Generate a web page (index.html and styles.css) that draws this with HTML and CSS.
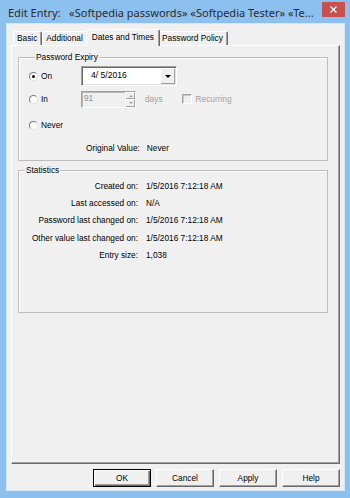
FILE: index.html
```html
<!DOCTYPE html>
<html lang="en">
<head>
  <meta charset="UTF-8" />
  <title>Edit Entry</title>
  <link rel="stylesheet" href="styles.css">
</head>
<body>
  <div class="window">
    <!-- Title bar -->
    <div class="titlebar">
      <span class="title">Edit Entry:   «Softpedia passwords» «Softpedia Tester» «Te...</span>
      <span class="close">
        <svg width="7" height="7" viewBox="0 0 7 7"><path d="M0.5 0.5L6.5 6.5M6.5 0.5L0.5 6.5" stroke="#fff" stroke-width="1.3"/></svg>
      </span>
    </div>

    <div class="client">
      <!-- Tabs -->
      <div class="tabs">
        <div class="tab">Basic</div>
        <div class="tab">Additional</div>
        <div class="tab active">Dates and Times</div>
        <div class="tab">Password Policy</div>
      </div>

      <div class="panel">
        <!-- Password Expiry -->
        <fieldset class="group expiry">
          <legend>Password Expiry</legend>
          <div class="row row-on">
            <label class="opt"><span class="radio checked"></span>On</label>
            <div class="combo">
              <span class="combo-text">4/ 5/2016</span>
              <span class="combo-btn"><i class="arrow"></i></span>
            </div>
          </div>
          <div class="row row-in">
            <label class="opt"><span class="radio"></span>In</label>
            <div class="spin">
              <span class="spin-text">91</span>
              <span class="spin-btns">
                <span class="spin-up"><i class="tri up"></i></span>
                <span class="spin-down"><i class="tri down"></i></span>
              </span>
            </div>
            <span class="muted days">days</span>
            <span class="check"></span>
            <span class="muted">Recurring</span>
          </div>
          <div class="row row-never">
            <label class="opt"><span class="radio"></span>Never</label>
          </div>
          <div class="row row-orig">
            <span class="key">Original Value:</span>
            <span>Never</span>
          </div>
        </fieldset>

        <!-- Statistics -->
        <fieldset class="group stats">
          <legend>Statistics</legend>
          <div class="stat-grid">
            <span class="key">Created on:</span><span>1/5/2016 7:12:18 AM</span>
            <span class="key">Last accessed on:</span><span>N/A</span>
            <span class="key">Password last changed on:</span><span>1/5/2016 7:12:18 AM</span>
            <span class="key">Other value last changed on:</span><span>1/5/2016 7:12:18 AM</span>
            <span class="key">Entry size:</span><span>1,038</span>
          </div>
        </fieldset>
      </div>

      <!-- Dialog buttons -->
      <div class="buttons">
        <button class="btn default">OK</button>
        <button class="btn">Cancel</button>
        <button class="btn">Apply</button>
        <button class="btn">Help</button>
      </div>
    </div>
  </div>
</body>
</html>
```

FILE: styles.css
```css
/* Global */
body {
  margin: 0;
  font-family: 'Liberation Sans', Arial, sans-serif;
  font-size: 8.3px;
  color: #000;
}

/* Window frame */
.window {
  width: 350px;
  height: 498px;
  box-sizing: border-box;
  background: #8cc0ef;
  padding: 0 5px 7px 6px;
  display: flex;
  flex-direction: column;
  overflow: hidden;
}

.titlebar {
  height: 23px;
  display: flex;
  align-items: flex-start;
}

.title {
  margin: 5px 0 0 2px;
  font-family: 'Noto Sans', 'Open Sans', sans-serif;
  font-size: 11px;
  line-height: 16px;
  color: #2b2b2b;
  white-space: pre;
}

.close {
  margin: 2px 0 0 auto;
  width: 23px;
  height: 15px;
  background: #c75050;
  display: flex;
  align-items: center;
  justify-content: center;
}

.client {
  flex: 1;
  min-height: 0;
  display: flex;
  flex-direction: column;
  background: #f0f0f0;
  border: 1px solid #d6e6f6;
  padding: 5px 4px 3px 4px;
}

/* Tabs */
.tabs {
  position: relative;
  z-index: 1;
  display: flex;
  align-items: flex-end;
  height: 16px;
  padding-left: 2px;
}

.tab {
  box-sizing: border-box;
  height: 14px;
  padding: 0 4px 0 3px;
  line-height: 13px;
  background: #f0f0f0;
  border-top: 1px solid #fff;
  border-left: 1px solid #fff;
  border-right: 1px solid #696969;
  border-radius: 2px 2px 0 0;
  box-shadow: inset -1px 0 0 #a0a0a0;
  white-space: nowrap;
}

.tab.active {
  position: relative;
  height: 17px;
  margin: 0 -2px -1px;
  padding: 0 5px;
  line-height: 14px;
}

.tab.active + .tab {
  border-left-color: #f0f0f0;
}

.panel {
  flex: 1;
  border: 1px solid;
  border-color: #fff #696969 #696969 #fff;
  box-shadow: inset -1px -1px 0 #a0a0a0;
  padding: 6px 11px 0 6px;
}

/* Group boxes */
.group {
  margin: 0;
  min-width: 0;
  border: 1px solid #bdbdbd;
  box-shadow: inset 1px 1px 0 #fff;
}

.group legend {
  margin-left: 6px;
  padding: 0 1px;
  line-height: 10px;
}

.expiry {
  padding: 4px 8px 5px 10px;
}

.stats {
  margin-top: 4px;
  padding: 2px 8px 49px 0;
}

.row {
  display: flex;
  align-items: center;
}

.row-on { height: 20px; }
.row-in { height: 18px; margin-top: 4px; }
.row-never { height: 14px; margin-top: 10px; }
.row-orig { height: 14px; margin-top: 9px; margin-left: 57px; }

.opt {
  width: 52px;
  display: flex;
  align-items: center;
}

.radio {
  box-sizing: border-box;
  width: 9px;
  height: 9px;
  margin-right: 3px;
  border-radius: 50%;
  border: 1px solid;
  border-color: #7a7a7a #e3e3e3 #e3e3e3 #7a7a7a;
  background: #fff;
  display: flex;
  align-items: center;
  justify-content: center;
}

.radio.checked::after {
  content: '';
  width: 3px;
  height: 3px;
  border-radius: 50%;
  background: #000;
}

/* Date combo */
.combo {
  box-sizing: border-box;
  width: 96px;
  height: 20px;
  display: flex;
  align-items: stretch;
  background: #fff;
  border: 1px solid;
  border-color: #a0a0a0 #fff #fff #a0a0a0;
  box-shadow: inset 1px 1px 0 #696969, inset -1px -1px 0 #e3e3e3;
}

.combo-text {
  flex: 1;
  padding-left: 9px;
  line-height: 17px;
  font-size: 8.6px;
}

.combo-btn {
  width: 14px;
  margin: 1px 1px 1px 0;
  background: #f0f0f0;
  border-left: 1px solid #fff;
  border-top: 1px solid #fff;
  box-shadow: inset -1px -1px 0 #a0a0a0;
  display: flex;
  align-items: center;
  justify-content: center;
}

.arrow {
  width: 0;
  height: 0;
  border-left: 3px solid transparent;
  border-right: 3px solid transparent;
  border-top: 3px solid #000;
}

/* Spin box */
.spin {
  box-sizing: border-box;
  width: 55px;
  height: 17px;
  display: flex;
  background: #f0f0f0;
  border: 1px solid;
  border-color: #a0a0a0 #fff #fff #a0a0a0;
  box-shadow: inset 1px 1px 0 #b9b9b9;
}

.spin-text {
  flex: 1;
  padding-left: 2px;
  line-height: 13px;
  color: #8d8d8d;
}

.spin-btns {
  width: 10px;
  display: flex;
  flex-direction: column;
}

.spin-up,
.spin-down {
  flex: 1;
  border-top: 1px solid #fff;
  border-left: 1px solid #fff;
  box-shadow: inset -1px -1px 0 #a0a0a0;
  display: flex;
  align-items: center;
  justify-content: center;
}

.tri {
  width: 0;
  height: 0;
  border-left: 2px solid transparent;
  border-right: 2px solid transparent;
}

.tri.up { border-bottom: 2px solid #a0a0a0; }
.tri.down { border-top: 2px solid #a0a0a0; }

.muted {
  color: #a0a0a0;
}

.days {
  margin: 0 19px 0 9px;
}

.check {
  box-sizing: border-box;
  width: 10px;
  height: 10px;
  margin-right: 4px;
  border: 1px solid;
  border-color: #a0a0a0 #fff #fff #a0a0a0;
  box-shadow: inset 1px 1px 0 #c8c8c8;
  background: #f0f0f0;
}

.key {
  margin-right: 7px;
}

/* Statistics */
.stat-grid {
  display: grid;
  grid-template-columns: 119px auto;
  column-gap: 8px;
  grid-auto-rows: 17.3px;
  align-items: center;
}

.stat-grid .key {
  margin: 0;
  text-align: right;
}

/* Buttons */
.buttons {
  display: flex;
  justify-content: flex-end;
  gap: 5px;
  margin-top: 5px;
}

.btn {
  box-sizing: border-box;
  width: 58px;
  height: 18px;
  padding: 0;
  font: inherit;
  color: #000;
  background: #f0f0f0;
  border: 1px solid;
  border-color: #fff #696969 #696969 #fff;
  box-shadow: inset -1px -1px 0 #a0a0a0;
}

.btn.default {
  border-color: #000;
  box-shadow: inset 1px 1px 0 #fff, inset -1px -1px 0 #696969, inset -2px -2px 0 #a0a0a0;
}
```
